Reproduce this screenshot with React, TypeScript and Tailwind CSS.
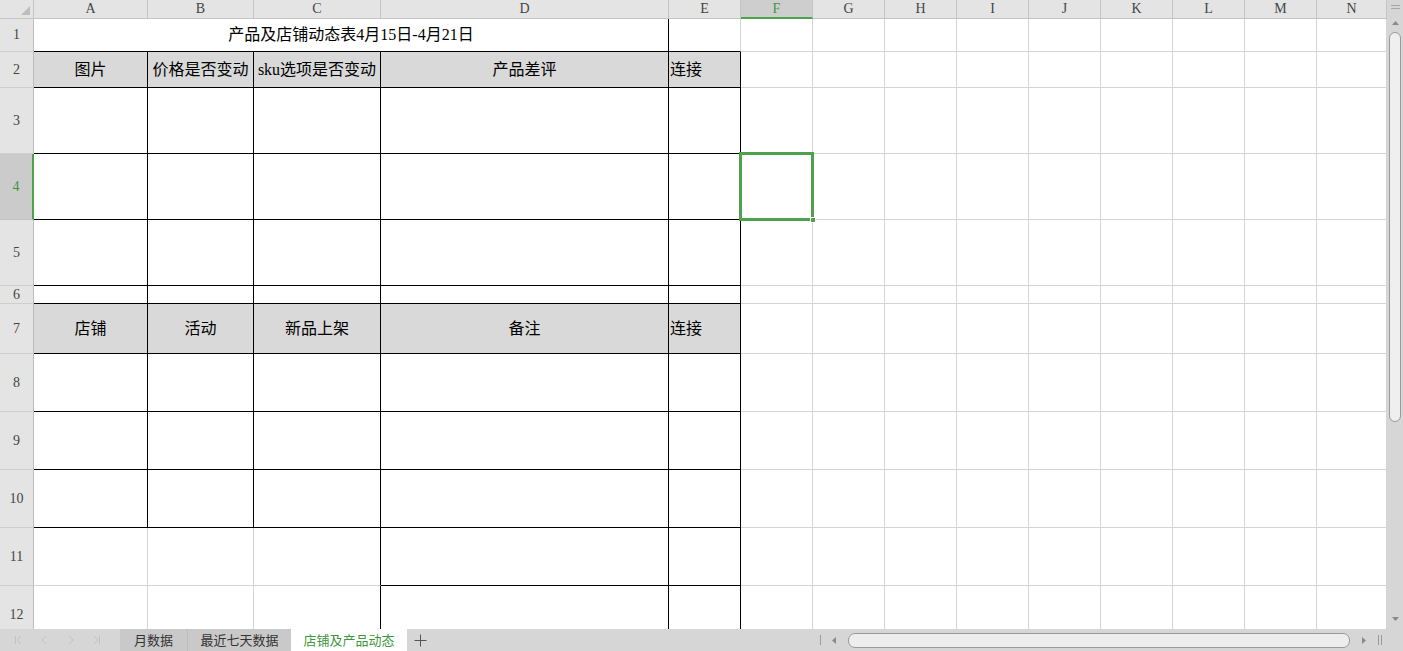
import clsx from "clsx";

const cols = ["A", "B", "C", "D", "E", "F", "G", "H", "I", "J", "K", "L", "M", "N"];
const rowNums = [1, 2, 3, 4, 5, 6, 7, 8, 9, 10, 11, 12];

// cell text by row -> column index
const content: Record<number, Record<number, string>> = {
  2: { 0: "图片", 1: "价格是否变动", 2: "sku选项是否变动", 3: "产品差评", 4: "连接" },
  7: { 0: "店铺", 1: "活动", 2: "新品上架", 3: "备注", 4: "连接" },
};

const cellFont = { fontFamily: '"Liberation Serif", "Noto Sans CJK SC", serif' };
const uiFont = { fontFamily: '"Noto Sans CJK SC", "Liberation Sans", sans-serif' };

const rightBlack = (r: number, c: number) =>
  (r >= 2 && r <= 10 && c <= 4) || (r >= 11 && c >= 2 && c <= 4);
const bottomBlack = (r: number, c: number) =>
  (r >= 1 && r <= 10 && c <= 4) || (r >= 11 && c >= 3 && c <= 4);

const Cell = ({ r, c }: { r: number; c: number }) => {
  const text = content[r]?.[c];
  const selected = r === 4 && c === 5;
  return (
    <div
      className={clsx(
        "relative flex items-center border-r border-b text-[16px] leading-none text-black whitespace-nowrap",
        rightBlack(r, c) ? "border-r-black" : "border-r-[#d4d4d4]",
        bottomBlack(r, c) ? "border-b-black" : "border-b-[#d4d4d4]",
        (r === 2 || r === 7) && c <= 4 && "bg-[#d9d9d9]",
        c === 4 ? "justify-start pl-[1px]" : "justify-center",
        selected && "z-10"
      )}
    >
      {text}
      {selected && (
        <>
          <div className="absolute -left-[2px] -top-[2px] right-[-2px] bottom-[-2px] border-[3px] border-[#4ea24e]" />
          <div className="absolute right-[-4px] bottom-[-4px] h-[6px] w-[6px] border border-white bg-[#4ea24e]" />
        </>
      )}
    </div>
  );
};

const Grid = () => (
  <div
    className="grid h-[629px] w-[1387px] shrink-0 grid-cols-[34px_114px_106px_127px_288px_repeat(9,72px)_70px] grid-rows-[19px_33px_36px_66px_66px_66px_18px_50px_58px_58px_58px_58px_58px] overflow-hidden"
    style={cellFont}
  >
    {/* corner */}
    <div className="relative border-r border-b border-[#c4c4c4] bg-[#e4e4e4]">
      <svg className="absolute right-[3px] bottom-[3px]" width="9" height="9" viewBox="0 0 9 9">
        <path d="M9 0 L9 9 L0 9 Z" fill="#bdbdbd" />
      </svg>
    </div>
    {cols.map((l) => (
      <div
        key={l}
        className={clsx(
          "flex items-center justify-center border-r border-b text-[14px] leading-none",
          l === "F"
            ? "border-r-[#c4c4c4] border-b-2 border-b-[#4ea24e] bg-[#cecece] text-[#3d963d]"
            : "border-[#c4c4c4] bg-[#e4e4e4] text-[#444]"
        )}
      >
        {l}
      </div>
    ))}
    {rowNums.map((r) => (
      <div key={r} className="contents">
        <div
          className={clsx(
            "flex items-center justify-center border-b border-r text-[14px] leading-none",
            r === 4
              ? "border-b-[#c4c4c4] border-r-2 border-r-[#4ea24e] bg-[#cbcbcb] text-[#3d963d]"
              : "border-b-[#cfcfcf] border-r-[#bdbdbd] bg-[#e4e4e4] text-[#444]"
          )}
        >
          {r}
        </div>
        {r === 1 ? (
          <>
            <div className="col-span-4 flex items-center justify-center border-r border-b border-black text-[16px] leading-none text-black">
              产品及店铺动态表4月15日-4月21日
            </div>
            {cols.slice(4).map((_, i) => (
              <div
                key={i}
                className={clsx(
                  "border-r border-b border-r-[#d4d4d4]",
                  i === 0 ? "border-b-black" : "border-b-[#d4d4d4]"
                )}
              />
            ))}
          </>
        ) : (
          cols.map((_, c) => <Cell key={c} r={r} c={c} />)
        )}
      </div>
    ))}
  </div>
);

const VScroll = () => (
  <div className="flex h-[629px] w-[16px] shrink-0 flex-col items-center bg-[#d6d6d6]">
    <div className="mt-[5px] flex w-[9px] flex-col gap-[2px]">
      <div className="h-[1px] bg-[#a6a6a6]" />
      <div className="h-[1px] bg-[#a6a6a6]" />
    </div>
    <svg className="mt-[12px]" width="7" height="4" viewBox="0 0 7 4">
      <path d="M0 4 L3.5 0 L7 4 Z" fill="#8a8a8a" />
    </svg>
    <div className="mt-[7px] h-[390px] w-[12px] rounded-[6px] border border-[#9a9a9a] bg-[#efefef]" />
    <div className="flex-1" />
    <svg className="mb-[8px]" width="7" height="4" viewBox="0 0 7 4">
      <path d="M0 0 L3.5 4 L7 0 Z" fill="#8a8a8a" />
    </svg>
  </div>
);

const TabBar = () => (
  <div className="flex h-[22px] items-center bg-[#d6d6d6] text-[13px]" style={uiFont}>
    <div className="flex w-[120px] items-center gap-[17px] pl-[14px]">
      <svg width="9" height="10" viewBox="0 0 9 10">
        <path d="M1.5 1 V9 M7 1 L3 5 L7 9" stroke="#c2c2c2" fill="none" />
      </svg>
      <svg width="9" height="10" viewBox="0 0 9 10">
        <path d="M6 1 L2 5 L6 9" stroke="#c2c2c2" fill="none" />
      </svg>
      <svg width="9" height="10" viewBox="0 0 9 10">
        <path d="M3 1 L7 5 L3 9" stroke="#c2c2c2" fill="none" />
      </svg>
      <svg width="9" height="10" viewBox="0 0 9 10">
        <path d="M2 1 L6 5 L2 9 M7.5 1 V9" stroke="#c2c2c2" fill="none" />
      </svg>
    </div>
    <div className="flex h-full w-[68px] items-center justify-center border-r border-[#bdbdbd] bg-[#c9c9c9] text-[#333]">
      月数据
    </div>
    <div className="flex h-full w-[103px] items-center justify-center bg-[#c9c9c9] text-[#333]">
      最近七天数据
    </div>
    <div className="flex h-full w-[116px] items-center justify-center bg-white text-[#3d963d]">
      店铺及产品动态
    </div>
    <svg className="ml-[7px]" width="13" height="13" viewBox="0 0 13 13">
      <path d="M6.5 0.5 V12.5 M0.5 6.5 H12.5" stroke="#555" fill="none" />
    </svg>
    <div className="flex-1" />
    <div className="flex w-[585px] items-center">
      <div className="ml-[2px] h-[10px] w-[1px] bg-[#9a9a9a]" />
      <svg className="ml-[11px]" width="4" height="7" viewBox="0 0 4 7">
        <path d="M4 0 L0 3.5 L4 7 Z" fill="#8a8a8a" />
      </svg>
      <div className="ml-[12px] h-[15px] w-[502px] rounded-[7px] border border-[#9a9a9a] bg-[#ededed]" />
      <svg className="ml-[12px]" width="4" height="7" viewBox="0 0 4 7">
        <path d="M0 0 L4 3.5 L0 7 Z" fill="#8a8a8a" />
      </svg>
      <div className="ml-[12px] flex gap-[2px]">
        <div className="h-[10px] w-[1px] bg-[#9a9a9a]" />
        <div className="h-[10px] w-[1px] bg-[#9a9a9a]" />
      </div>
    </div>
  </div>
);

export default function App() {
  return (
    <div className="h-[651px] w-[1403px] overflow-hidden bg-white">
      <div className="flex">
        <Grid />
        <VScroll />
      </div>
      <TabBar />
    </div>
  );
}
